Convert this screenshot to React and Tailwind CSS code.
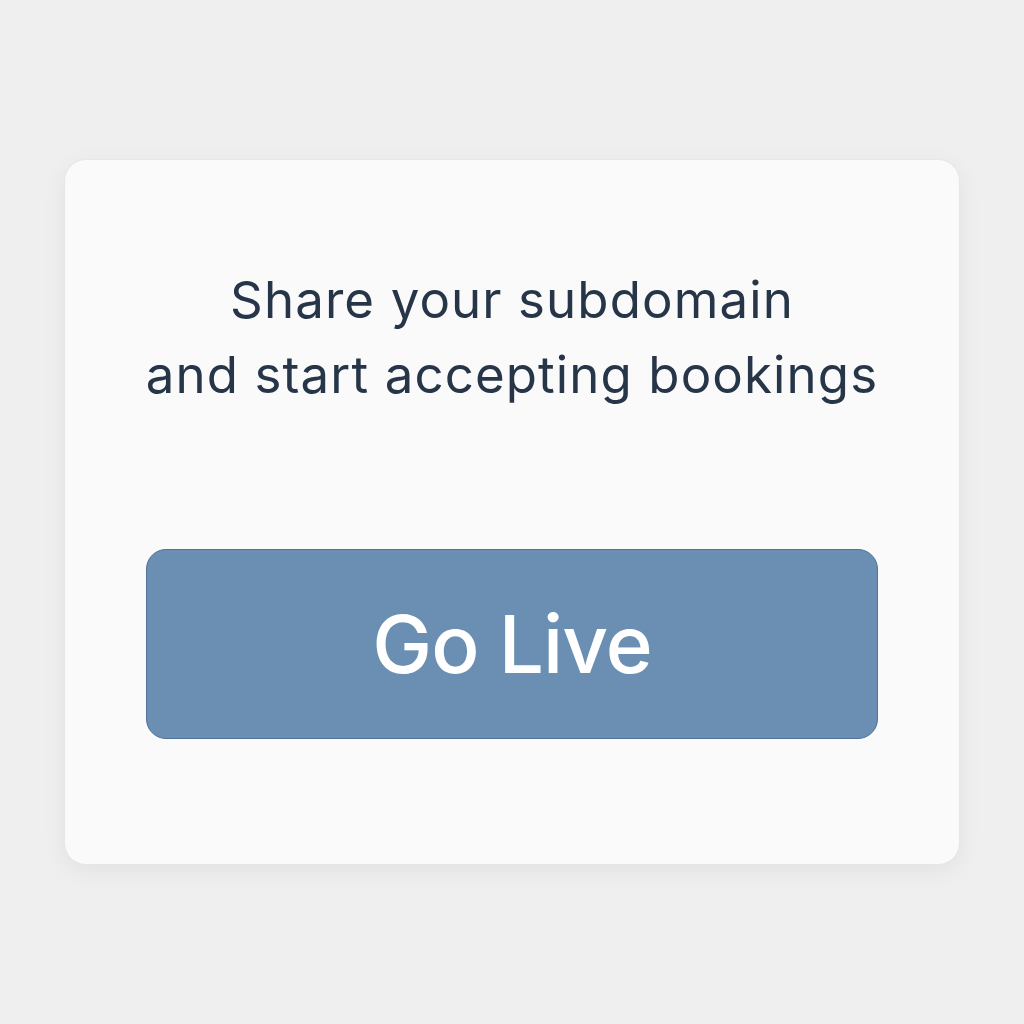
export default function App() {
  return (
    <div
      className="min-h-screen w-full bg-[#efefef] flex items-start justify-center pt-[159px]"
      style={{ fontFamily: 'Inter, Roboto, "Noto Sans", sans-serif' }}
    >
      <div className="w-[896px] h-[706px] rounded-[22px] bg-[#fafafa] border border-[#e6e6e6] shadow-[0_6px_24px_rgba(0,0,0,0.06)] flex flex-col items-center pt-[102px] px-[81px]">
        <h1 className="text-center whitespace-nowrap text-[51px] leading-[75px] font-normal text-[#263648] tracking-[1.1px]">
          Share your subdomain
          <br />
          and start accepting bookings
        </h1>
        <button className="mt-[137px] w-full h-[190px] rounded-[20px] bg-[#6a8fb3] border border-[#4f739a] text-white text-[80px] font-medium tracking-[-1px] flex items-center justify-center">
          Go Live
        </button>
      </div>
    </div>
  );
}
